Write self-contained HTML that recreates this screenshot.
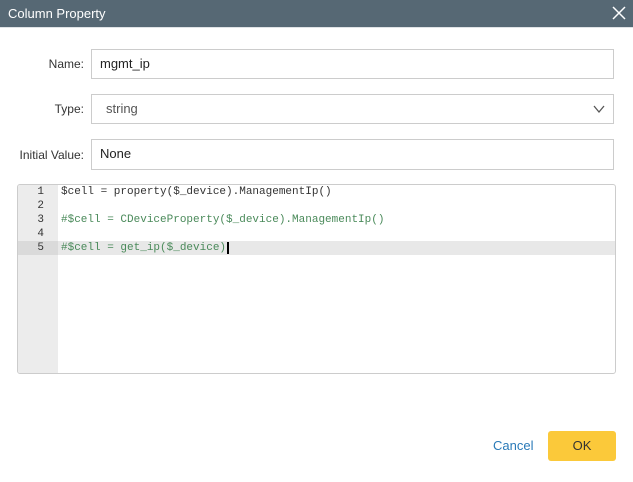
<!DOCTYPE html>
<html><head><style>
body{margin:0;width:633px;height:482px;background:#fff;font-family:"Liberation Sans",sans-serif;position:relative;overflow:hidden}
.t{position:absolute;left:0;top:0;width:633px;height:27px;background:#566874;color:#fff;font-size:13px;line-height:27px;border-bottom:1px solid #dfe3e6}
.t span{margin-left:8px}
.x{position:absolute;right:7px;top:6px}
.lbl{position:absolute;right:549px;font-size:12px;color:#333}
.in{position:absolute;left:91px;width:523px;height:28px;border:1px solid #ccc;font-size:13px;line-height:28px;box-sizing:border-box;padding-left:8px;color:#222;height:30px}
.ed{position:absolute;left:17px;top:184px;width:599px;height:190px;border:1px solid #ccc;border-radius:3px;box-sizing:border-box;overflow:hidden}
.g{position:absolute;left:0;top:0;width:40px;height:100%;background:#ececec}
.ln{position:absolute;left:0;width:599px;height:14px;font-family:"Liberation Mono",monospace;font-size:11px;line-height:14px}
.ln b{font-weight:normal;display:inline-block;width:26px;text-align:right;color:#333}
.ln i{font-style:normal;position:absolute;left:43px;color:#333}
.c i{color:#4a8a5a}
</style></head><body>
<div class="t"><span>Column Property</span>
<svg class="x" width="14" height="14"><path d="M1 1L13 13M13 1L1 13" stroke="#fff" stroke-width="1.5"/></svg></div>
<div class="lbl" style="top:57px">Name:</div>
<div class="in" style="top:49px">mgmt_ip</div>
<div class="lbl" style="top:102px">Type:</div>
<div class="in" style="top:94px;color:#555;padding-left:14px">string
<svg style="position:absolute;right:8px;top:9px" width="12" height="10"><path d="M1 2L6 8L11 2" fill="none" stroke="#555" stroke-width="1.3"/></svg></div>
<div class="lbl" style="top:148px">Initial Value:</div>
<div class="in" style="top:139px;height:31px">None</div>
<div class="ed"><div class="g"></div>
<div class="ln" style="top:0px"><b>1</b><i>$cell = property($_device).ManagementIp()</i></div>
<div class="ln" style="top:14px"><b>2</b></div>
<div class="ln c" style="top:28px"><b>3</b><i>#$cell = CDeviceProperty($_device).ManagementIp()</i></div>
<div class="ln" style="top:42px"><b>4</b></div>
<div class="ln c" style="top:56px;background:#e8e8e8"><b style="background:#dadada;width:40px;padding-right:14px;box-sizing:border-box">5</b><i>#$cell = get_ip($_device)<span style="border-left:2px solid #000;margin-left:1px"></span></i></div>
</div>
<div style="position:absolute;left:493px;top:438px;font-size:13px;color:#2a7ab8">Cancel</div>
<div style="position:absolute;left:548px;top:431px;width:68px;height:30px;background:#fbc93a;border-radius:3px;font-size:13px;line-height:30px;text-align:center;color:#333">OK</div>
</body></html>
